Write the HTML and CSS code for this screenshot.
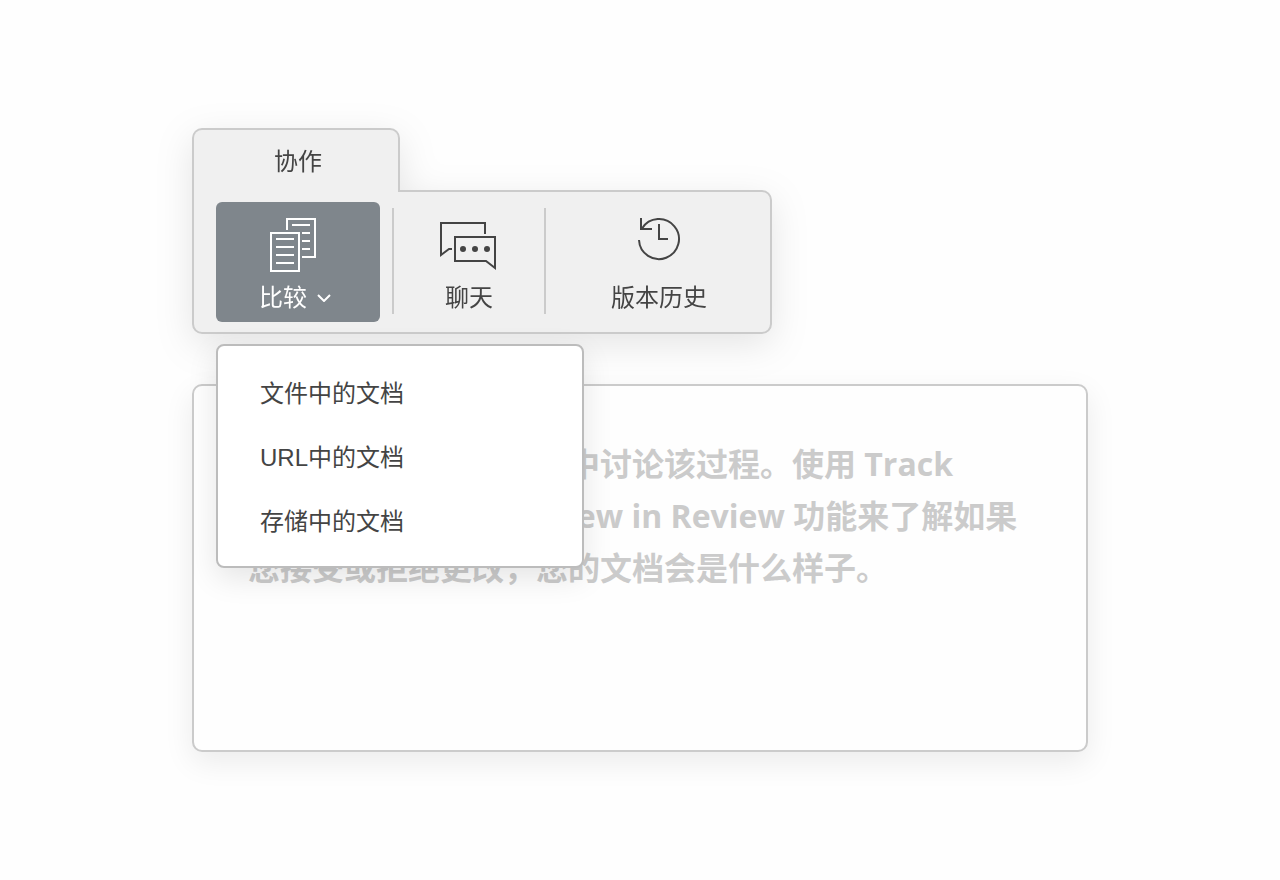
FILE: index.html
```html
<!DOCTYPE html>
<html lang="zh-CN">
<head>
<meta charset="utf-8">
<meta name="viewport" content="width=device-width, initial-scale=1">
<title>协作</title>
<link rel="stylesheet" href="styles.css">
</head>
<body>
<main class="stage">
  <section class="ribbon">
    <div class="ribbon-shape">
      <button class="tab" type="button">协作</button>
      <div class="toolbar">
        <button class="tool tool-compare" type="button" aria-haspopup="true" aria-expanded="true">
          <svg class="icon" width="50" height="56" viewBox="0 0 50 56" aria-hidden="true">
            <path d="M17 14V3H45V41H32M22 9H40M32 17H40M32 25H40M32 33H40"/>
            <rect x="1" y="17" width="28" height="38"/>
            <path d="M6 23H24M6 31H24M6 39H24M6 47H24"/>
          </svg>
          <span class="label">比较
            <svg class="chevron" width="14" height="8" viewBox="0 0 14 8" aria-hidden="true"><path d="M1 1L7 7L13 1"/></svg>
          </span>
        </button>
        <span class="divider"></span>
        <button class="tool tool-chat" type="button">
          <svg class="icon" width="58" height="56" viewBox="0 0 58 56" aria-hidden="true">
            <path d="M45 18V7H1V39L9 33H12"/>
            <path d="M15 21H55V52L46 45H15Z"/>
            <g class="dots"><circle cx="23" cy="33" r="3"/><circle cx="35" cy="33" r="3"/><circle cx="47" cy="33" r="3"/></g>
          </svg>
          <span class="label">聊天</span>
        </button>
        <span class="divider"></span>
        <button class="tool tool-history" type="button">
          <svg class="icon" width="44" height="56" viewBox="0 0 44 56" aria-hidden="true">
            <path d="M2 24A20 20 0 1 0 5 12.5M4 2V13H15M22 8V23H31"/>
          </svg>
          <span class="label">版本历史</span>
        </button>
      </div>
    </div>
    <div class="menu" role="menu">
      <button class="menu-item" type="button" role="menuitem">文件中的文档</button>
      <button class="menu-item" type="button" role="menuitem">URL中的文档</button>
      <button class="menu-item" type="button" role="menuitem">存储中的文档</button>
    </div>
  </section>
  <article class="document">
    <p class="document-text">在侧边聊天窗口的评论中讨论该过程。使用 Track Changes 选项的 Preview in Review 功能来了解如果您接受或拒绝更改，您的文档会是什么样子。</p>
  </article>
</main>
</body>
</html>
```
FILE: styles.css
```css
* {
  box-sizing: border-box;
}

body {
  margin: 0;
  background: #fefefe;
  color: #444;
  font-family: "Liberation Sans", "Noto Sans CJK SC", sans-serif;
  font-size: 24px;
}

button {
  margin: 0;
  padding: 0;
  border: 0;
  background: none;
  color: inherit;
  font: inherit;
  cursor: pointer;
}

.stage {
  max-width: 896px;
  margin: 0 auto;
  padding: 128px 0;
}

.ribbon {
  position: relative;
  z-index: 1;
  width: fit-content;
}

.ribbon-shape {
  display: flex;
  flex-direction: column;
  align-items: flex-start;
  filter: drop-shadow(0 10px 18px rgba(0, 0, 0, 0.1));
}

.tab {
  z-index: 1;
  width: 208px;
  height: 64px;
  margin-bottom: -2px;
  padding: 0 0 4px 4px;
  border: 2px solid #cbcbcb;
  border-bottom: 0;
  border-radius: 10px 10px 0 0;
  background: #f0f0f0;
}

.toolbar {
  display: flex;
  align-items: flex-start;
  gap: 12px;
  padding: 10px 10px 10px 22px;
  border: 2px solid #cbcbcb;
  border-radius: 0 10px 10px 10px;
  background: #f0f0f0;
}

.tool {
  display: flex;
  flex-direction: column;
  align-items: center;
  gap: 10px;
  height: 120px;
  padding-top: 14px;
  border-radius: 6px;
}

.tool-compare {
  width: 164px;
  padding-right: 6px;
  background: #7f868c;
  color: #fff;
}

.tool-chat {
  width: 126px;
}

.tool-history {
  width: 202px;
}

.icon {
  fill: none;
  stroke: currentColor;
  stroke-width: 2;
}

.dots {
  fill: currentColor;
  stroke: none;
}

.label {
  display: flex;
  align-items: center;
  gap: 10px;
  line-height: 32px;
}

.chevron {
  fill: none;
  stroke: currentColor;
  stroke-width: 2;
}

.divider {
  width: 2px;
  height: 106px;
  margin-top: 6px;
  background: #cbcbcb;
}

.menu {
  position: absolute;
  top: calc(100% + 10px);
  left: 24px;
  display: flex;
  flex-direction: column;
  width: 368px;
  padding: 14px 0;
  border: 2px solid #bcbcbc;
  border-radius: 8px;
  background: #fff;
  box-shadow: 0 10px 30px rgba(0, 0, 0, 0.1);
}

.menu-item {
  height: 64px;
  padding: 0 42px 2px;
  text-align: left;
}

.document {
  min-height: 368px;
  margin-top: 50px;
  padding: 52px 54px;
  border: 2px solid #cbcbcb;
  border-radius: 10px;
  background: #fefefe;
  box-shadow: 0 10px 30px rgba(0, 0, 0, 0.08);
}

.document-text {
  margin: 0;
  color: #cbcbcb;
  font-family: "Open Sans", "Noto Sans CJK SC", sans-serif;
  font-size: 32px;
  font-weight: 700;
  line-height: 52px;
}
```
